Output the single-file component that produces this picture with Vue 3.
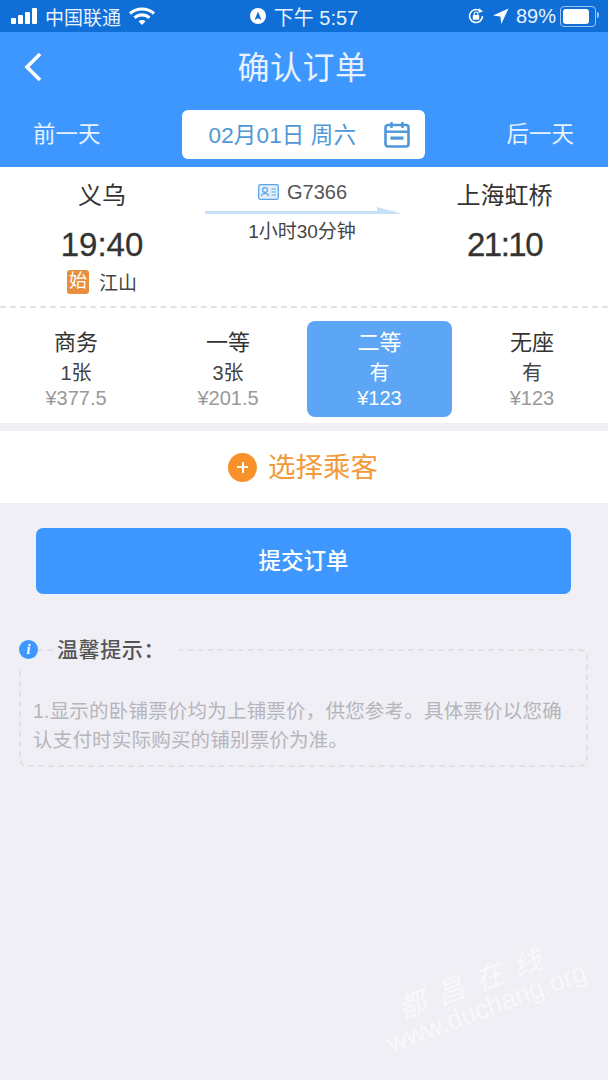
<template>
  <div class="page">
    <div class="status-bar">
      <div class="status-left">
        <span class="signal"><i></i><i></i><i></i><i></i></span>
        <span class="carrier">中国联通</span>
        <svg class="wifi" width="26" height="19" viewBox="0 0 26 19">
          <path d="M1 6.500C8 .5 18 .5 25 6.500" fill="none" stroke="#fff" stroke-width="3.200" />
          <path d="M5.500 10.800C10 7 16 7 20.500 10.800" fill="none" stroke="#fff" stroke-width="3.200" />
          <path d="M9.500 14.200c2-1.600 5-1.600 7 0L13 18z" fill="#fff" />
        </svg>
      </div>
      <div class="status-center">
        <svg width="16" height="16" viewBox="0 0 16 16">
          <circle cx="8" cy="8" r="8" fill="#fff" />
          <path d="M8 3.500 11.500 12 8 10.300 4.500 12z" fill="#0f6fd6" />
        </svg>
        <span>下午 5:57</span>
      </div>
      <div class="status-right">
        <svg width="18" height="18" viewBox="0 0 18 18">
          <path d="M15.500 9A6.500 6.500 0 1 1 13 3.900" fill="none" stroke="#fff" stroke-width="1.600" />
          <path d="M12 1.200 16 4.600 11.400 6z" fill="#fff" />
          <rect x="5.800" y="8" width="6.400" height="4.800" rx="1" fill="#fff" />
          <path d="M7.200 8V6.800a1.800 1.800 0 0 1 3.600 0V8" fill="none" stroke="#fff" stroke-width="1.100" />
        </svg>
        <svg class="arrow" width="16" height="16" viewBox="0 0 16 16">
          <path d="M15.500.5 0 7.600l7.400.9.9 7.400z" fill="#fff" />
        </svg>
        <span class="pct">89%</span>
        <span class="battery"><b></b></span>
      </div>
    </div>

    <div class="header">
      <div class="nav">
        <svg class="back" width="22" height="30" viewBox="0 0 22 30">
          <path d="M18 2 5 15l13 13" fill="none" stroke="#fff" stroke-width="3.600" />
        </svg>
        <span class="nav-title">确认订单</span>
      </div>
      <div class="date-row">
        <span class="day-link">前一天</span>
        <div class="date-box">
          <span>02月01日 周六</span>
          <svg width="26" height="27" viewBox="0 0 26 27">
            <rect x="1.500" y="4" width="23" height="21.500" rx="2.500" fill="none" stroke="#4e97d8" stroke-width="2.600" />
            <rect x="1.500" y="9.500" width="23" height="2.400" fill="#4e97d8" />
            <path d="M7.500 1v6M18.500 1v6" stroke="#4e97d8" stroke-width="2.400" />
            <rect x="6.500" y="15.500" width="13" height="3.200" fill="#4e97d8" />
          </svg>
        </div>
        <span class="day-link">后一天</span>
      </div>
    </div>

    <div class="train">
      <div class="station">
        <div class="city">义乌</div>
        <div class="time">19:40</div>
        <div class="origin"><span class="origin-tag">始</span>江山</div>
      </div>
      <div class="trip">
        <div class="train-no">
          <svg width="21" height="16" viewBox="0 0 21 16">
            <rect x=".7" y=".7" width="19.600" height="14.600" rx="1.500" fill="#e3f0fb" stroke="#5aa5e6" stroke-width="1.300" />
            <circle cx="7" cy="6" r="2.400" fill="none" stroke="#5aa5e6" stroke-width="1.200" />
            <path d="M3.400 12.300c.5-4 6.700-4 7.200 0M13.500 5h4.500M13.500 8h4.500M13.500 11h4.500" fill="none" stroke="#5aa5e6" stroke-width="1.200" />
          </svg>
          <span>G7366</span>
        </div>
        <div class="line"></div>
        <div class="duration">1小时30分钟</div>
      </div>
      <div class="station">
        <div class="city">上海虹桥</div>
        <div class="time">21:10</div>
      </div>
    </div>

    <div class="seats">
      <div v-for="s in seats" :key="s.name" class="seat" :class="{ active: s.active }">
        <div class="seat-name">{{ s.name }}</div>
        <div class="seat-left">{{ s.left }}</div>
        <div class="seat-price">{{ s.price }}</div>
      </div>
    </div>

    <div class="passenger">
      <span class="plus"></span>
      <span class="passenger-text">选择乘客</span>
    </div>

    <button class="submit"><span>提交订单</span></button>

    <div class="tips">
      <div class="tips-head">
        <span class="info">i</span>
        <span class="tips-title">温馨提示：</span>
      </div>
      <div class="tips-body">1.显示的卧铺票价均为上铺票价，供您参考。具体票价以您确认支付时实际购买的铺别票价为准。</div>
    </div>

    <div class="watermark">
      <div class="wm-cn">都昌在线</div>
      <div class="wm-en">www.duchang.org</div>
    </div>
  </div>
</template>

<script setup>
const seats = [
  { name: '商务', left: '1张', price: '¥377.5' },
  { name: '一等', left: '3张', price: '¥201.5' },
  { name: '二等', left: '有', price: '¥123', active: true },
  { name: '无座', left: '有', price: '¥123' }
]
</script>

<style>
body { background: #efeff5; }
</style>

<style scoped>
.page {
  position: relative;
  width: 608px;
  height: 1080px;
  overflow: hidden;
  background: #efeff5;
  font-family: "Liberation Sans", "Noto Sans CJK SC", sans-serif;
  color: #333;
}
.status-bar {
  height: 32px;
  background: #0f6fd6;
  color: #e8f2fc;
  font-size: 19px;
  display: grid;
  grid-template-columns: 1fr auto 1fr;
  align-items: center;
  padding: 0 10px;
  box-sizing: border-box;
}
.status-left, .status-center, .status-right {
  display: flex;
  align-items: center;
}
.status-left { gap: 8px; }
.status-center { gap: 8px; margin-left: 0; font-size: 20px; }
.status-right { justify-content: flex-end; margin-right: -1px; }
.signal {
  display: flex;
  align-items: flex-end;
  gap: 2px;
  height: 16px;
  margin-left: 1px;
}
.signal i {
  width: 5px;
  background: #fff;
  border-radius: 1px;
}
.signal i:nth-child(1) { height: 6px; }
.signal i:nth-child(2) { height: 9px; }
.signal i:nth-child(3) { height: 12px; }
.signal i:nth-child(4) { height: 16px; }
.wifi { margin-left: 0; }
.arrow { margin-left: 8px; }
.pct { margin-left: 7px; font-size: 20px; }
.battery {
  position: relative;
  margin-left: 4px;
  width: 30px;
  height: 15px;
  border: 1px solid #9cc6f0;
  border-radius: 4px;
  padding: 2px;
  box-sizing: content-box;
  margin-right: 3px;
}
.battery::after {
  content: "";
  position: absolute;
  right: -4px;
  top: 5px;
  width: 2px;
  height: 6px;
  background: #9cc6f0;
  border-radius: 0 2px 2px 0;
}
.battery b {
  display: block;
  width: 26px;
  height: 15px;
  background: #fff;
  border-radius: 3px;
}
.header {
  background: #3d97ff;
  color: #fff;
  height: 135px;
}
.nav {
  position: relative;
  height: 71px;
  display: flex;
  align-items: center;
  justify-content: center;
}
.back {
  position: absolute;
  left: 22px;
  top: 20px;
}
.nav-title {
  font-size: 32px;
  color: #e6f2ff;
  letter-spacing: .5px;
  margin: 0 3px 5px 0;
}
.date-row {
  display: flex;
  align-items: center;
  justify-content: space-between;
  padding: 7px 34px 0 33px;
}
.day-link {
  font-size: 22.500px;
  color: #e6f2ff;
  margin-bottom: 5px;
}
.date-box {
  width: 243px;
  height: 49px;
  background: #fff;
  border-radius: 6px;
  color: #4e97d8;
  font-size: 22.500px;
  letter-spacing: .15px;
  display: flex;
  align-items: center;
  justify-content: space-between;
  padding: 0 15px 0 27px;
  box-sizing: border-box;
  margin-left: -1px;
}
.date-box span { margin-bottom: 4px; }
.date-box svg { margin-bottom: 1px; }
.train {
  height: 141px;
  background: #fff;
  display: grid;
  grid-template-columns: 204px 200px 201px;
  text-align: center;
  border-bottom: 2px dashed #e2e2e2;
  box-sizing: border-box;
}
.city {
  font-size: 24px;
  line-height: 36px;
  margin-top: 11px;
}
.time {
  font-size: 33px;
  line-height: 40px;
  margin-top: 11px;
  color: #333;
  -webkit-text-stroke: .3px #333;
}
.station:last-child .time { letter-spacing: -1.500px; }
.origin {
  display: flex;
  align-items: center;
  justify-content: center;
  gap: 10px;
  font-size: 19px;
  margin-top: 3px;
  color: #444;
}
.origin-tag {
  width: 22px;
  height: 24px;
  line-height: 22px;
  background: #e88e3c;
  color: #fff;
  border-radius: 3px;
  font-size: 18px;
}
.train-no {
  display: flex;
  align-items: center;
  justify-content: center;
  gap: 8px;
  font-size: 20px;
  color: #555;
  margin-top: 13px;
  margin-left: -3px;
  height: 24px;
}
.line {
  position: relative;
  height: 3px;
  background: #c5e0f8;
  margin: 7px 0 0 1px;
  width: 190px;
}
.line::after {
  content: "";
  position: absolute;
  right: -7px;
  bottom: 0;
  border-left: 25px solid #c5e0f8;
  border-top: 7px solid transparent;
}
.duration {
  font-size: 19px;
  line-height: 26px;
  margin-top: 5px;
  margin-left: -4px;
  color: #444;
}
.seats {
  height: 115px;
  background: #fff;
  display: grid;
  grid-template-columns: repeat(4, 1fr);
  padding: 13px 3px 0;
  box-sizing: border-box;
  gap: 6px;
}
.seat {
  height: 96px;
  border-radius: 8px;
  text-align: center;
  color: #333;
}
.seat:nth-child(3) { margin-right: 1px; }
.seat-name { font-size: 22px; line-height: 30px; margin-top: 6px; }
.seat-left { font-size: 20px; line-height: 26px; margin-top: 3px; color: #444; }
.seat-price { font-size: 20px; line-height: 24px; color: #999; }
.seat.active { background: #5ca6f5; color: #fff; }
.seat.active .seat-left, .seat.active .seat-price { color: #fff; }
.seat .seat-name { padding-top: 1px; margin-bottom: -1px; }
.passenger {
  margin-top: 8px;
  height: 72px;
  background: #fff;
  color: #f4993a;
  font-size: 27.500px;
  display: flex;
  align-items: center;
  justify-content: center;
  gap: 11px;
  padding-right: 2px;
  box-sizing: border-box;
}
.passenger-text { margin-bottom: 4px; }
.plus {
  position: relative;
  width: 29px;
  height: 29px;
  border-radius: 50%;
  background: #f8912b;
}
.plus::before, .plus::after {
  content: "";
  position: absolute;
  background: #fff;
  left: 9px;
  top: 13.500px;
  width: 11px;
  height: 2px;
}
.plus::after {
  left: 13.500px;
  top: 9px;
  width: 2px;
  height: 11px;
}
.submit {
  display: block;
  width: 535px;
  height: 66px;
  margin: 25px 0 0 36px;
  padding: 0 0 5px;
  background: #3d97ff;
  color: #fff;
  border: none;
  border-radius: 7px;
  font-family: inherit;
  font-size: 22.500px;
  font-weight: 500;
}
.tips {
  position: relative;
  margin: 38px 20px 0 19px;
}
.tips-head {
  display: flex;
  align-items: center;
  position: relative;
  z-index: 1;
  height: 34px;
}
.tips-head::after {
  content: "";
  position: absolute;
  left: 0;
  top: 17px;
  width: 6px;
  height: 18px;
  background: #efeff5;
}
.info {
  position: relative;
  z-index: 1;
  width: 19px;
  height: 19px;
  border-radius: 50%;
  background: #3d97ff;
  color: #fff;
  font: italic bold 14px/19px "Liberation Serif", serif;
  text-align: center;
}
.tips-title {
  margin-left: 19px;
  padding-right: 14px;
  font-size: 21px;
  letter-spacing: .6px;
  font-weight: 500;
  color: #555;
  background: #efeff5;
  margin-bottom: 3px;
}
.tips-body {
  margin-top: -17px;
  height: 118px;
  border: 2px dashed #e0e0e6;
  border-radius: 8px;
  box-sizing: border-box;
  padding: 46px 24px 0 12px;
  font-size: 19.500px;
  letter-spacing: .2px;
  line-height: 29px;
  color: #b5b5bb;
}
.watermark {
  position: absolute;
  left: 394px;
  bottom: 20px;
  width: 200px;
  transform: rotate(-20.400deg);
  transform-origin: left bottom;
  color: #f8f8fb;
}
.wm-cn {
  font-family: "Noto Sans CJK SC", sans-serif;
  font-style: italic;
  font-size: 28px;
  letter-spacing: 13px;
  line-height: 36px;
  margin-left: 22px;
  white-space: nowrap;
}
.wm-en {
  font-size: 26.500px;
  line-height: 34px;
  white-space: nowrap;
  margin-top: -5px;
}
</style>
